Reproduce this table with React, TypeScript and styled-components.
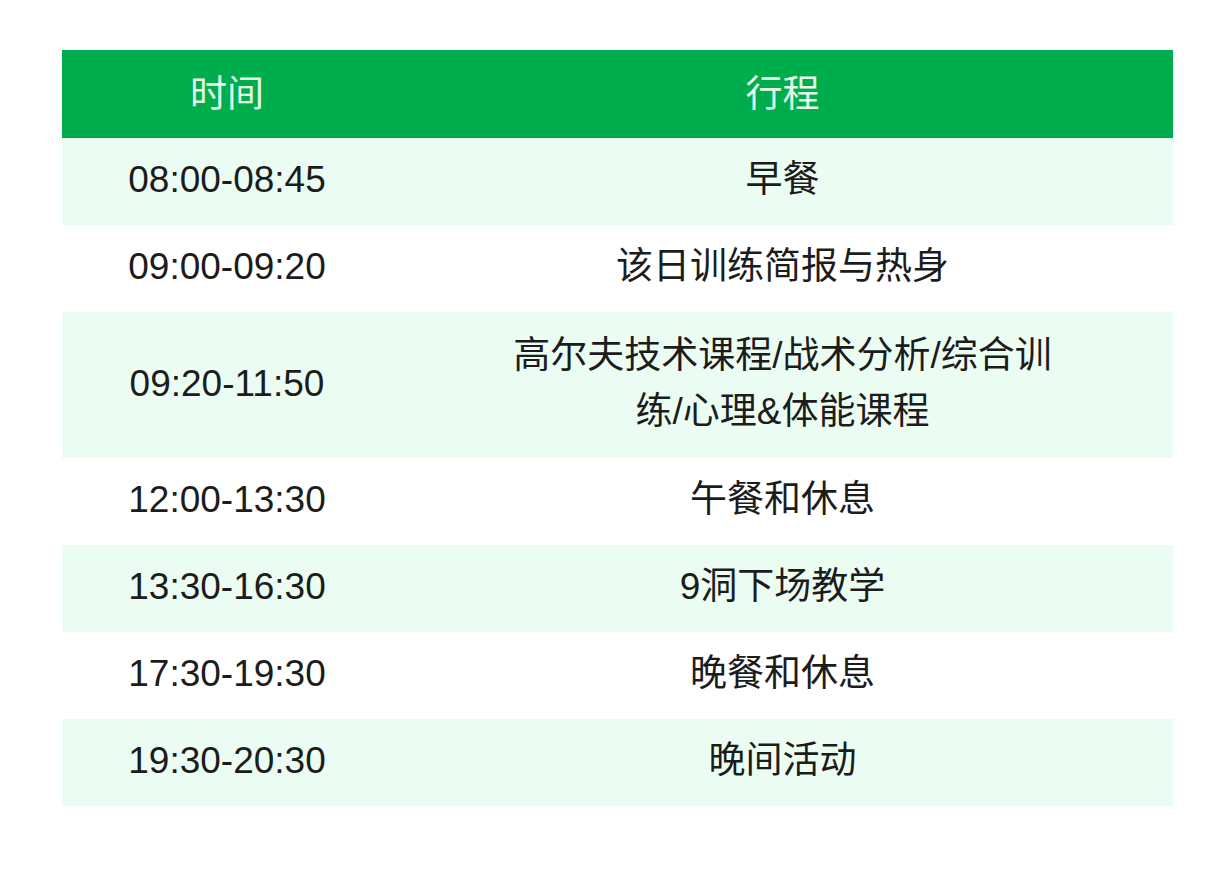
import React from 'react';
import styled, { createGlobalStyle } from 'styled-components';

const GlobalStyle = createGlobalStyle`
    html, body {
        margin: 0;
        padding: 0;
        background: #ffffff;
    }
`;

type Item = {
    time: string;
    plan: string;
    tall?: boolean;
};

const items: Item[] = [
    { time: '08:00-08:45', plan: '早餐' },
    { time: '09:00-09:20', plan: '该日训练简报与热身' },
    { time: '09:20-11:50', plan: '高尔夫技术课程/战术分析/综合训\n练/心理&体能课程', tall: true },
    { time: '12:00-13:30', plan: '午餐和休息' },
    { time: '13:30-16:30', plan: '9洞下场教学' },
    { time: '17:30-19:30', plan: '晚餐和休息' },
    { time: '19:30-20:30', plan: '晚间活动' },
];

export default function App() {
    return (
        <>
            <GlobalStyle />
            <Page>
                <Table>
                    <HeadRow>
                        <HeadCell>时间</HeadCell>
                        <HeadCell>行程</HeadCell>
                    </HeadRow>
                    {items.map((item, i) => (
                        <Row key={item.time} $shaded={i % 2 === 0} $tall={item.tall}>
                            <Cell>{item.time}</Cell>
                            <Cell>{item.plan}</Cell>
                        </Row>
                    ))}
                </Table>
            </Page>
        </>
    );
}

const Page = styled.div`
    width: 1228px;
    height: 876px;
    box-sizing: border-box;
    padding: 50px 0 0 62px;
    font-family: "Liberation Sans", "Noto Sans CJK SC", sans-serif;
`;

const Table = styled.div`
    width: 1111px;
    display: flex;
    flex-direction: column;
`;

const HeadRow = styled.div`
    display: grid;
    grid-template-columns: 330px 1fr;
    height: 87px;
    background: #00ad4d;
    border-bottom: 1px solid #07a047;
`;

const HeadCell = styled.div`
    display: flex;
    align-items: center;
    justify-content: center;
    font-size: 37px;
    color: #e6fbe9;
    padding-bottom: 5px;
`;

const Row = styled.div<{ $shaded: boolean; $tall?: boolean }>`
    display: grid;
    grid-template-columns: 330px 1fr;
    height: ${({ $tall }) => ($tall ? '146px' : '87px')};
    background: ${({ $shaded }) => ($shaded ? '#ebfcf2' : '#ffffff')};
`;

const Cell = styled.div`
    display: flex;
    align-items: center;
    justify-content: center;
    text-align: center;
    white-space: pre-line;
    font-size: 37px;
    line-height: 56px;
    color: #1c1c1c;
    padding-bottom: 3px;
`;
